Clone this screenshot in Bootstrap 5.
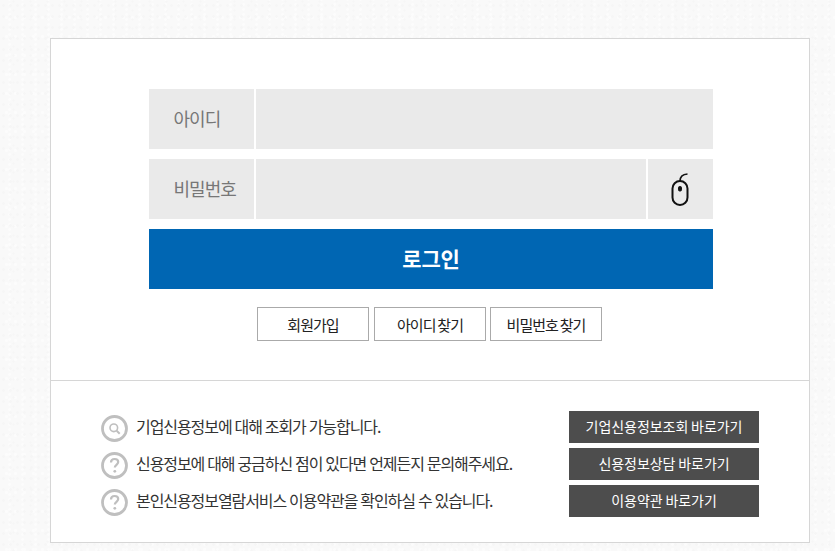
<!DOCTYPE html>
<html lang="ko">
<head>
<meta charset="utf-8">
<title>로그인</title>
<link href="https://cdn.jsdelivr.net/npm/bootstrap@5.3.0/dist/css/bootstrap.min.css" rel="stylesheet">
<style>
html,body{height:100%;overflow:hidden}
body{background-color:#f9f9f9;background-image:radial-gradient(circle,#f6f6f6 1px,transparent 1.6px),radial-gradient(circle,#fcfcfc 1px,transparent 1.8px),radial-gradient(circle,#f6f6f6 .8px,transparent 1.4px),radial-gradient(circle,#fcfcfc 1.2px,transparent 2px);background-size:7px 11px,13px 5px,17px 9px,9px 19px;background-position:0 0,3px 2px,5px 6px,2px 8px;font-family:"Noto Sans CJK KR","Noto Sans",sans-serif;padding:38px 0 0 50px}
.sheet{width:760px;height:505px;background:#fff;border:1px solid #d6d6d6}
.login-area{height:341px;padding:50px 96px 0 98px}
.field-row{display:flex;gap:2px;height:60px;margin-bottom:10px}
.field-label{width:105px;background:#eaeaea;color:#777;font-size:18px;line-height:58px;padding-left:24.5px;flex:none;letter-spacing:-.95px}
.field-row .form-control{border:0;border-radius:0;background:#eaeaea;height:60px;box-shadow:none}
.mouse-cell{width:65px;flex:none;background:#eaeaea}
.login-btn{display:block;width:100%;height:60px;background:#0066b3;color:#fff;border:0;border-radius:0;font-size:21px;font-weight:700;letter-spacing:-.1px;padding:0 0 1px}
.login-btn:hover{background:#0066b3;color:#fff}
.sub-links{margin-top:18px;margin-left:108px}
.sub-btn{height:34px;background:#fff;border:1px solid #aaa;border-radius:0;color:#222;font-size:15px;padding:0;line-height:31px;letter-spacing:-.95px;word-spacing:-1.5px}
.w-a{width:112px}
.sheet .gap-a{margin-left:5px}
.sheet .gap-b{margin-left:4px}
.info-area{border-top:1px solid #d6d6d6;padding:30px 50px 0 50px}
.info-row{height:32px;margin-bottom:5px}
.info-circle{width:27px;height:27px;flex:none;margin:3px 8px 0 0}
.info-text{color:#333;font-size:16px;flex:1;letter-spacing:-1.07px;word-spacing:-.45px;padding-bottom:3px}
.go-btn{width:190px;height:32px;flex:none;background:#4d4d4d;color:#fff;border:0;border-radius:0;font-size:14px;padding:0;line-height:31px;letter-spacing:-.05px;word-spacing:-1px}
.go-btn:hover{background:#4d4d4d;color:#fff}
</style>
</head>
<body>
<div class="sheet">
  <div class="login-area">
    <div class="field-row">
      <label class="field-label" for="uid">아이디</label>
      <input id="uid" class="form-control" type="text">
    </div>
    <div class="field-row">
      <label class="field-label" for="pw">비밀번호</label>
      <input id="pw" class="form-control" type="password">
      <div class="mouse-cell d-flex align-items-center justify-content-center">
        <svg width="20" height="36" viewBox="0 0 20 36" fill="none" stroke="#111" stroke-width="2">
          <rect x="1.500" y="10" width="15" height="24" rx="7.500"/>
          <path d="M9 10C9 5.500 11 3.500 16.500 3" stroke-width="1.700"/>
          <rect x="7.500" y="15.500" width="3" height="4.500" rx="1.200" fill="#111" stroke-width="1"/>
        </svg>
      </div>
    </div>
    <button class="btn login-btn" type="button">로그인</button>
    <div class="sub-links d-flex">
      <button class="btn sub-btn w-a" type="button">회원가입</button>
      <button class="btn sub-btn w-a gap-a" type="button">아이디 찾기</button>
      <button class="btn sub-btn w-a gap-b" type="button">비밀번호 찾기</button>
    </div>
  </div>
  <div class="info-area">
    <div class="info-row d-flex align-items-center">
      <svg class="info-circle" viewBox="0 0 27 27" fill="none" stroke="#bfbfbf">
        <circle cx="13.500" cy="13.500" r="12" stroke-width="2.800"/>
        <circle cx="12.800" cy="12.800" r="3.800" stroke-width="1.600"/>
        <path d="M15.700 15.700l3 3" stroke-width="2"/>
      </svg>
      <span class="info-text">기업신용정보에 대해 조회가 가능합니다.</span>
      <a class="btn go-btn" href="#">기업신용정보조회 바로가기</a>
    </div>
    <div class="info-row d-flex align-items-center">
      <svg class="info-circle" viewBox="0 0 27 27" fill="none" stroke="#bfbfbf">
        <circle cx="13.500" cy="13.500" r="12" stroke-width="2.800"/>
        <path d="M10 10.500c0-2.200 1.600-3.500 3.600-3.500s3.600 1.200 3.600 3.100c0 2.600-3.400 2.800-3.400 5.400" stroke-width="2.200"/>
        <circle cx="13.800" cy="19.300" r="1.400" fill="#bfbfbf" stroke="none"/>
      </svg>
      <span class="info-text">신용정보에 대해 궁금하신 점이 있다면 언제든지 문의해주세요.</span>
      <a class="btn go-btn" href="#">신용정보상담 바로가기</a>
    </div>
    <div class="info-row d-flex align-items-center">
      <svg class="info-circle" viewBox="0 0 27 27" fill="none" stroke="#bfbfbf">
        <circle cx="13.500" cy="13.500" r="12" stroke-width="2.800"/>
        <path d="M10 10.500c0-2.200 1.600-3.500 3.600-3.500s3.600 1.200 3.600 3.100c0 2.600-3.400 2.800-3.400 5.400" stroke-width="2.200"/>
        <circle cx="13.800" cy="19.300" r="1.400" fill="#bfbfbf" stroke="none"/>
      </svg>
      <span class="info-text">본인신용정보열람서비스 이용약관을 확인하실 수 있습니다.</span>
      <a class="btn go-btn" href="#">이용약관 바로가기</a>
    </div>
  </div>
</div>
<script src="https://cdn.jsdelivr.net/npm/bootstrap@5.3.0/dist/js/bootstrap.bundle.min.js"></script>
</body>
</html>
